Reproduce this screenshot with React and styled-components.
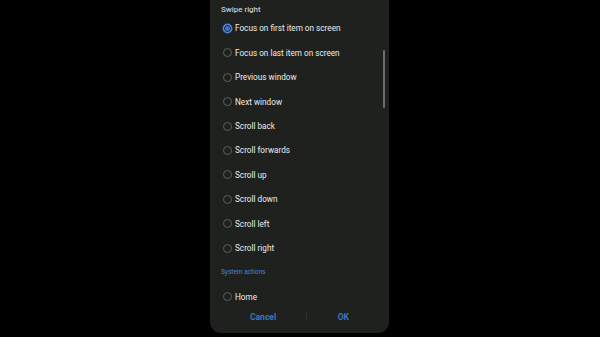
import React from "react";
import styled, { createGlobalStyle } from "styled-components";

const options = [
  "Focus on first item on screen",
  "Focus on last item on screen",
  "Previous window",
  "Next window",
  "Scroll back",
  "Scroll forwards",
  "Scroll up",
  "Scroll down",
  "Scroll left",
  "Scroll right",
];

function App() {
  return (
    <Screen>
      <GlobalStyle />
      <Dialog>
        <Scroller>
          <Heading>Swipe right</Heading>
          {options.map((label, i) => (
            <Option key={label}>
              <Radio checked={i === 0} />
              <Label>{label}</Label>
            </Option>
          ))}
          <Section>System actions</Section>
          <Option>
            <Radio />
            <Label>Home</Label>
          </Option>
        </Scroller>
        <ScrollThumb />
        <Footer>
          <Action>Cancel</Action>
          <Divider />
          <Action>OK</Action>
        </Footer>
      </Dialog>
    </Screen>
  );
}

const GlobalStyle = createGlobalStyle`
  html, body {
    margin: 0;
    background: #000;
    font-family: Roboto, "Noto Sans", sans-serif;
  }
`;

const Screen = styled.div`
  width: 600px;
  height: 337px;
  display: flex;
  justify-content: center;
`;

const Dialog = styled.div`
  position: relative;
  width: 179px;
  height: 333px;
  margin-right: 1px;
  background: #1f211f;
  border-radius: 0 0 11px 11px;
  display: flex;
  flex-direction: column;
  overflow: hidden;
`;

const Scroller = styled.div`
  height: 308px;
  flex-shrink: 0;
  overflow: hidden;
  padding-left: 11px;
`;

const Heading = styled.div`
  height: 16.3px;
  padding-top: 3.5px;
  box-sizing: border-box;
  font-size: 8px;
  line-height: 12px;
  color: #e2e2e2;
`;

const Option = styled.div`
  height: 24.4px;
  display: flex;
  align-items: center;
`;

const Radio = styled.span`
  width: 9px;
  height: 9px;
  margin-left: 1.5px;
  border-radius: 50%;
  box-sizing: border-box;
  border: 1px solid ${({ checked }) => (checked ? "#5a8ee0" : "#5e605e")};
  background: ${({ checked }) => (checked ? "#3b72d0" : "transparent")};
  box-shadow: ${({ checked }) =>
    checked ? "inset 0 0 0 1px #1f211f, 0 0 0 0.5px #3b72d0" : "none"};
  flex-shrink: 0;
`;

const Label = styled.span`
  margin-left: 3.5px;
  font-size: 8.2px;
  color: #ececec;
  white-space: nowrap;
`;

const Section = styled.div`
  height: 24.4px;
  display: flex;
  align-items: center;
  font-size: 6.5px;
  color: #4a86d8;
`;

const ScrollThumb = styled.div`
  position: absolute;
  right: 4px;
  top: 50px;
  width: 2px;
  height: 58px;
  border-radius: 1px;
  background: #6b6d6b;
`;

const Footer = styled.div`
  height: 25px;
  padding-bottom: 8px;
  box-sizing: border-box;
  display: flex;
  align-items: center;
  justify-content: space-between;
  padding-left: 40px;
  padding-right: 40px;
`;

const Action = styled.span`
  font-size: 8.5px;
  font-weight: 700;
  color: #3d75c4;
`;

const Divider = styled.span`
  width: 1px;
  height: 9px;
  background: #2e302e;
`;

export default App;
